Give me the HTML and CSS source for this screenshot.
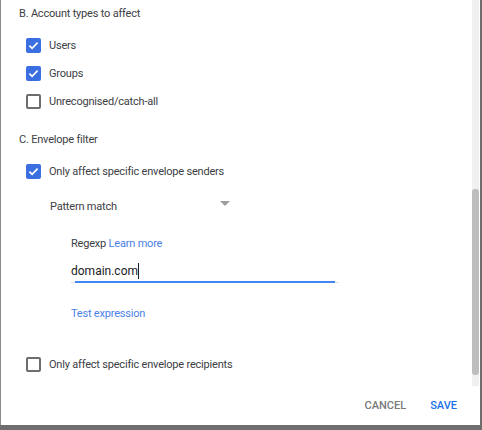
FILE: index.html
```html
<!DOCTYPE html>
<html>
<head>
<meta charset="utf-8">
<link rel="stylesheet" href="styles.css">
</head>
<body>
<div class="dialog">
  <div class="main">
    <div class="content">
      <div class="sec-title">B. Account types to affect</div>
      <div class="group g-accounts">
        <div class="row"><span class="cb on"><svg viewBox="0 0 15 15"><path d="M3.4 7.6l2.7 2.7 5.5-5.6" /></svg></span><span class="label">Users</span></div>
        <div class="row"><span class="cb on"><svg viewBox="0 0 15 15"><path d="M3.4 7.6l2.7 2.7 5.5-5.6" /></svg></span><span class="label">Groups</span></div>
        <div class="row"><span class="cb"></span><span class="label">Unrecognised/catch-all</span></div>
      </div>
      <div class="sec-title sec-c">C. Envelope filter</div>
      <div class="group g-env">
        <div class="row"><span class="cb on"><svg viewBox="0 0 15 15"><path d="M3.4 7.6l2.7 2.7 5.5-5.6" /></svg></span><span class="label">Only affect specific envelope senders</span></div>
        <div class="select"><span>Pattern match</span><span class="arrow"></span></div>
        <div class="sub">
          <div class="field-label">Regexp <span class="link">Learn more</span></div>
          <div class="input"><span class="value">domain.com</span><span class="caret"></span></div>
          <div class="link test">Test expression</div>
        </div>
        <div class="row recip"><span class="cb"></span><span class="label">Only affect specific envelope recipients</span></div>
      </div>
    </div>
    <div class="scrollbar"><div class="thumb"></div></div>
  </div>
  <div class="footer">
    <span class="btn cancel">CANCEL</span>
    <span class="btn save">SAVE</span>
  </div>
</div>
</body>
</html>
```
FILE: styles.css
```css
html, body {
  margin: 0;
  padding: 0;
}
body {
  width: 482px;
  height: 430px;
  background: #6e6e6e;
  font-family: Roboto, "Noto Sans", "Liberation Sans", sans-serif;
  overflow: hidden;
}
.dialog {
  width: 480px;
  height: 425px;
  box-sizing: border-box;
  border-left: 1px solid #8c8c8c;
  background: #ffffff;
  display: flex;
  flex-direction: column;
}
.main {
  height: 386px;
  display: flex;
}
.content {
  flex: 1;
  padding-left: 18px;
  font-size: 11px;
  letter-spacing: -0.2px;
}
.scrollbar {
  width: 7px;
  margin-right: 1px;
  background: #f0f0f0;
  display: flex;
  flex-direction: column;
  justify-content: flex-end;
  padding-bottom: 11px;
  box-sizing: border-box;
}
.thumb {
  height: 186px;
  background: #bdbdbd;
  border-radius: 3px;
}
.sec-title {
  height: 28px;
  line-height: 28px;
  color: #3c4043;
}
.group {
  margin-top: 3px;
  margin-left: 7px;
}
.sec-c {
  margin-top: 11px;
}
.row {
  height: 28px;
  display: flex;
  align-items: center;
}
.cb {
  width: 15px;
  height: 15px;
  box-sizing: border-box;
  border: 2px solid #6d6d6d;
  border-radius: 2px;
  margin-right: 8px;
  flex: none;
}
.cb.on {
  background: #3b6ee0;
  border: none;
}
.cb svg {
  display: block;
  width: 15px;
  height: 15px;
}
.cb path {
  fill: none;
  stroke: #ffffff;
  stroke-width: 1.7;
}
.label {
  color: #3c4043;
}
.select {
  margin-top: 7px;
  margin-left: 24px;
  width: 180px;
  height: 28px;
  display: flex;
  align-items: center;
  justify-content: space-between;
  color: #3c4043;
}
.arrow {
  width: 0;
  height: 0;
  border-left: 5px solid transparent;
  border-right: 5px solid transparent;
  border-top: 5px solid #9e9e9e;
  margin-top: -5px;
}
.sub {
  margin-left: 45px;
}
.field-label {
  margin-top: 10px;
  height: 28px;
  line-height: 28px;
  color: #3c4043;
}
.link {
  color: #4a7fe6;
}
.input {
  width: 268px;
  height: 22px;
  margin-top: 2px;
  border-bottom: 1px solid #e0e0e0;
  position: relative;
  display: flex;
  align-items: center;
}
.input::after {
  content: "";
  position: absolute;
  left: 4px;
  right: 4px;
  bottom: -1px;
  height: 2px;
  background: #4285f4;
}
.value {
  font-size: 12px;
  letter-spacing: 0;
  color: #202124;
}
.caret {
  width: 1px;
  height: 16px;
  background: #202124;
}
.test {
  margin-top: 17px;
  height: 28px;
  line-height: 28px;
}
.recip {
  margin-top: 22px;
}
.footer {
  flex: 1;
  display: flex;
  justify-content: flex-end;
  align-items: center;
  padding-right: 23px;
  gap: 24px;
  font-size: 11px;
  font-weight: 500;
}
.cancel {
  color: #7a7a7a;
}
.save {
  color: #1a73e8;
}
```
